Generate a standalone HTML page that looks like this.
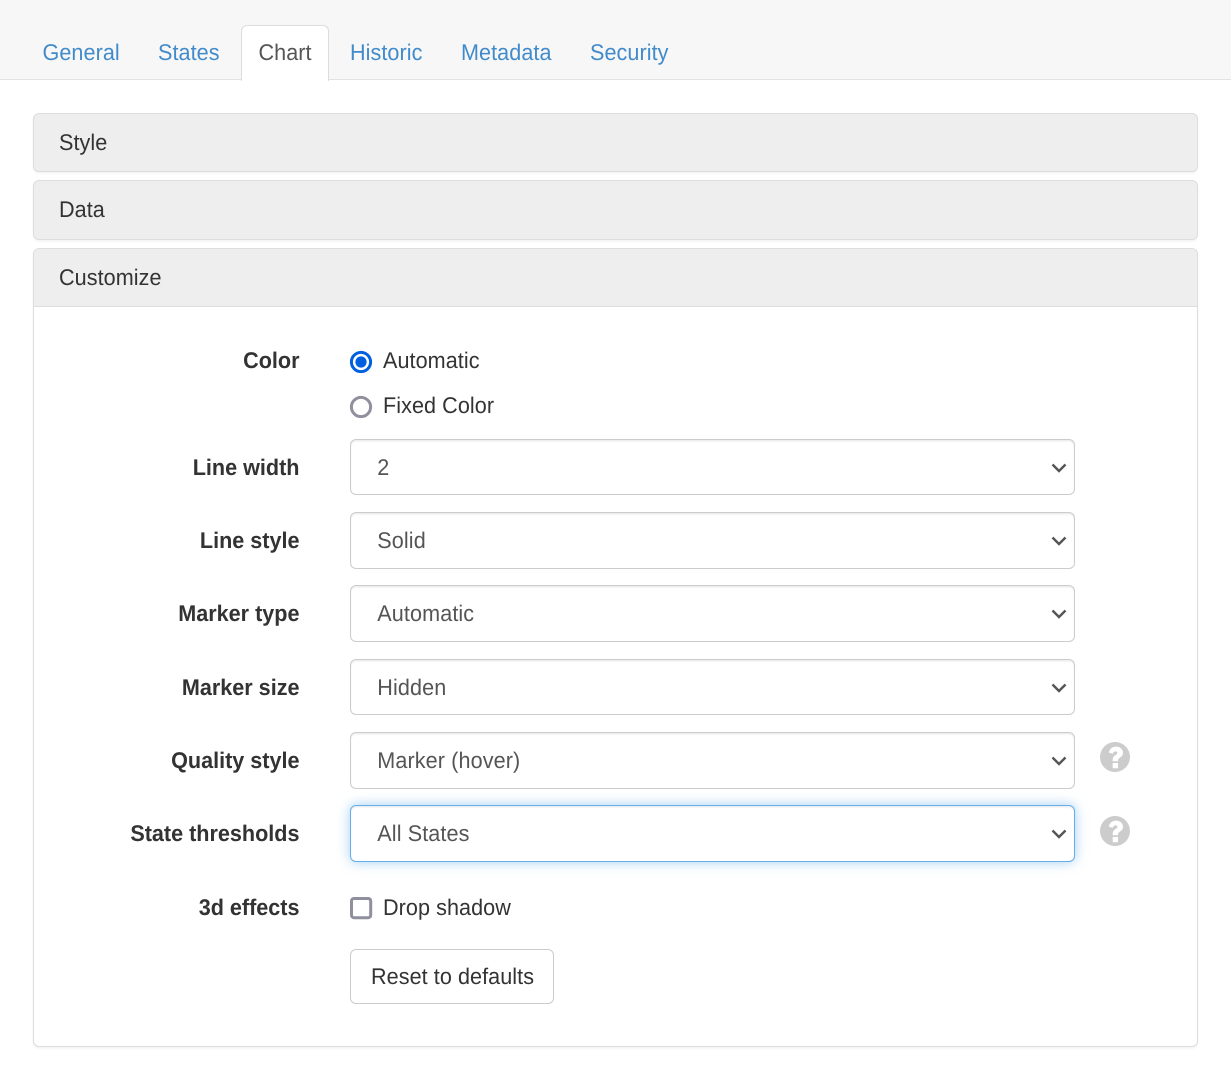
<!DOCTYPE html>
<html><head><meta charset="utf-8">
<style>
html,body{margin:0;padding:0;background:#fff}
body{width:1231px;height:1080px;position:relative;overflow:hidden;font-family:"Liberation Sans",sans-serif;font-size:21.6px;color:#333;text-rendering:geometricPrecision}
.a{position:absolute;white-space:nowrap;line-height:26px;transform:scaleY(1.05);transform-origin:0 20.5px;letter-spacing:.06px}
.top{position:absolute;left:0;top:0;width:1231px;height:79px;background:#f7f7f7;border-bottom:1px solid #e2e2e2}
.tab{color:#428bca;top:40px}
.active{position:absolute;left:241px;top:25px;width:86px;height:55px;background:#fff;border:1px solid #ddd;border-bottom:0;border-radius:6px 6px 0 0}
.panel{position:absolute;left:33px;width:1163px;background:#eee;border:1px solid #ddd;border-radius:6px;box-shadow:0 1.5px 2px rgba(0,0,0,.05);box-sizing:content-box}
.lbl{font-weight:bold;right:931.5px;letter-spacing:0}
.sel{position:absolute;left:350px;width:723px;background:#fff;border:1px solid #ccc;border-radius:6px;box-shadow:inset 0 1.5px 1.5px rgba(0,0,0,.075)}
.sel.f{border-color:#66afe9;box-shadow:inset 0 1.5px 1.5px rgba(0,0,0,.075),0 0 12px rgba(102,175,233,.6)}
.sv{color:#555;left:377.3px;letter-spacing:.1px}
svg{position:absolute;display:block}
</style></head><body>
<div class="top"></div>
<div class="active"></div>
<div class="a tab" style="left:42.5px">General</div>
<div class="a tab" style="left:158px">States</div>
<div class="a" style="left:258.5px;top:40px;color:#555">Chart</div>
<div class="a tab" style="left:350px">Historic</div>
<div class="a tab" style="left:461px">Metadata</div>
<div class="a tab" style="left:590px">Security</div>

<div class="panel" style="top:113px;height:57px"></div>
<div class="a" style="left:59px;top:130px">Style</div>
<div class="panel" style="top:180px;height:58px"></div>
<div class="a" style="left:59px;top:197px">Data</div>
<div class="panel" style="top:248px;height:797px;background:#fff"></div>
<div style="position:absolute;left:34px;top:249px;width:1163px;height:57px;background:#eee;border-bottom:1px solid #ddd;border-radius:5px 5px 0 0"></div>
<div class="a" style="left:59px;top:265px">Customize</div>

<div class="a lbl" style="top:348px">Color</div>
<svg style="left:349px;top:350px" width="24" height="24"><circle cx="12" cy="12" r="9.6" fill="#fff" stroke="#0060df" stroke-width="3"/><circle cx="12" cy="12" r="5.6" fill="#0060df"/></svg>
<div class="a" style="left:383px;top:348px">Automatic</div>
<svg style="left:349px;top:395px" width="24" height="24"><circle cx="12" cy="12" r="9.6" fill="#fff" stroke="#8f8f9d" stroke-width="3"/></svg>
<div class="a" style="left:383px;top:393px">Fixed Color</div>

<div class="a lbl" style="top:455px">Line width</div>
<div class="sel" style="top:439px;height:54px"></div>
<div class="a sv" style="top:455px">2</div>
<svg style="left:1051px;top:461px" width="16" height="14"><path d="M1.5 3.5L8 10L14.5 3.5" fill="none" stroke="#555" stroke-width="2.4"/></svg>

<div class="a lbl" style="top:528px">Line style</div>
<div class="sel" style="top:512px;height:55px"></div>
<div class="a sv" style="top:528px">Solid</div>
<svg style="left:1051px;top:534px" width="16" height="14"><path d="M1.5 3.5L8 10L14.5 3.5" fill="none" stroke="#555" stroke-width="2.4"/></svg>

<div class="a lbl" style="top:601px">Marker type</div>
<div class="sel" style="top:585px;height:55px"></div>
<div class="a sv" style="top:601px">Automatic</div>
<svg style="left:1051px;top:607px" width="16" height="14"><path d="M1.5 3.5L8 10L14.5 3.5" fill="none" stroke="#555" stroke-width="2.4"/></svg>

<div class="a lbl" style="top:675px">Marker size</div>
<div class="sel" style="top:659px;height:54px"></div>
<div class="a sv" style="top:675px">Hidden</div>
<svg style="left:1051px;top:681px" width="16" height="14"><path d="M1.5 3.5L8 10L14.5 3.5" fill="none" stroke="#555" stroke-width="2.4"/></svg>

<div class="a lbl" style="top:748px">Quality style</div>
<div class="sel" style="top:732px;height:55px"></div>
<div class="a sv" style="top:748px">Marker (hover)</div>
<svg style="left:1051px;top:754px" width="16" height="14"><path d="M1.5 3.5L8 10L14.5 3.5" fill="none" stroke="#555" stroke-width="2.4"/></svg>
<svg style="left:1100px;top:742px" width="30" height="30"><circle cx="15" cy="15" r="15" fill="#ccc"/><path d="M8.8 10.6C9.8 6.6 12.5 4.6 16 4.6C20 4.6 23 7.2 23 10.6C23 13.4 21.3 14.7 19.6 15.9C18.4 16.7 18 17.4 18 18.6V19.2H12.7V17.8C12.7 15.3 14 14 15.7 12.9C16.8 12.2 17.4 11.7 17.4 10.9C17.4 10 16.7 9.4 15.6 9.4C14.3 9.4 13.4 10.3 12.7 11.7Z M12.7 21H18V26.2H12.7Z" fill="#fff"/></svg>

<div class="a lbl" style="top:821px">State thresholds</div>
<div class="sel f" style="top:805px;height:55px"></div>
<div class="a sv" style="top:821px">All States</div>
<svg style="left:1051px;top:827px" width="16" height="14"><path d="M1.5 3.5L8 10L14.5 3.5" fill="none" stroke="#555" stroke-width="2.4"/></svg>
<svg style="left:1100px;top:816px" width="30" height="30"><circle cx="15" cy="15" r="15" fill="#ccc"/><path d="M8.8 10.6C9.8 6.6 12.5 4.6 16 4.6C20 4.6 23 7.2 23 10.6C23 13.4 21.3 14.7 19.6 15.9C18.4 16.7 18 17.4 18 18.6V19.2H12.7V17.8C12.7 15.3 14 14 15.7 12.9C16.8 12.2 17.4 11.7 17.4 10.9C17.4 10 16.7 9.4 15.6 9.4C14.3 9.4 13.4 10.3 12.7 11.7Z M12.7 21H18V26.2H12.7Z" fill="#fff"/></svg>

<div class="a lbl" style="top:895px">3d effects</div>
<svg style="left:349px;top:896px" width="24" height="24"><rect x="2.5" y="2.5" width="19.2" height="19.2" rx="2.5" fill="#fff" stroke="#8f8f9d" stroke-width="3"/></svg>
<div class="a" style="left:383px;top:895px">Drop shadow</div>

<div style="position:absolute;left:350px;top:949px;width:202px;height:53px;border:1px solid #ccc;border-radius:6px;background:#fff"></div>
<div class="a" style="left:371px;top:964px">Reset to defaults</div>
</body></html>
